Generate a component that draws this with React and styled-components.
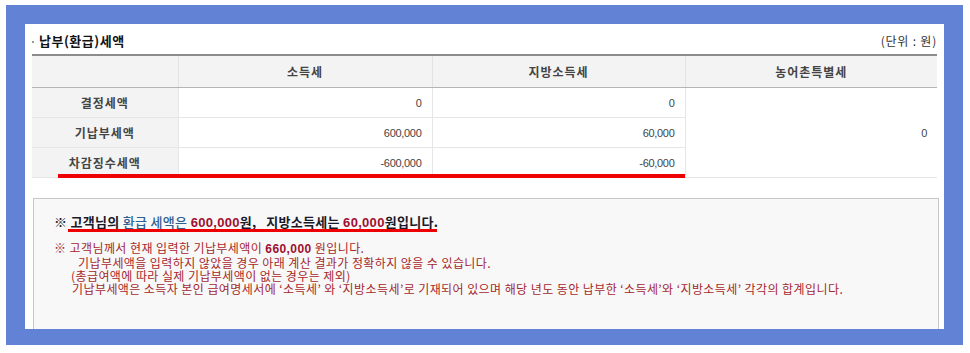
import React from "react";
import styled, { createGlobalStyle } from "styled-components";

const Global = createGlobalStyle`
  html, body { margin: 0; padding: 0; background: #ffffff; }
  body { font-family: "Liberation Sans", "Noto Sans CJK KR", sans-serif; }
`;

const Page = styled.div`
  padding: 5px 0 0 6px;
`;

const Frame = styled.div`
  width: 919px;
  background: #6282d5;
  padding: 19px 19px 16px 19px;
`;

const Sheet = styled.div`
  position: relative;
  height: 305px;
  background: #ffffff;
  padding: 0 7px;
  overflow: hidden;
`;

const TitleBar = styled.div`
  height: 30px;
  display: flex;
  align-items: center;
  justify-content: space-between;
`;

const Title = styled.div`
  display: flex;
  align-items: center;
  gap: 5px;
  font-family: "Noto Sans CJK KR", sans-serif;
  font-size: 13px;
  font-weight: 700;
  letter-spacing: 0.5px;
  color: #111;
  padding-top: 2px;
`;

const Bullet = styled.span`
  width: 2px;
  height: 2px;
  margin-top: 3px;
  background: #9a9a9a;
`;

const Unit = styled.div`
  font-family: "Noto Sans CJK KR", sans-serif;
  font-size: 12px;
  letter-spacing: 0.8px;
  color: #333;
  padding-top: 2px;
`;

const Table = styled.table`
  width: 905px;
  border-collapse: collapse;
  table-layout: fixed;
  border-top: 2px solid #8c8c8c;
`;

const HeadCell = styled.th`
  height: 31px;
  padding: 0;
  background: #f3f3f3;
  border-bottom: 1px solid #b4b4b4;
  border-left: 1px solid #e2e2e2;
  font-family: "Noto Sans CJK KR", sans-serif;
  font-size: 12px;
  font-weight: 700;
  letter-spacing: 1px;
  color: #444;
  text-align: center;
  &:first-child { border-left: none; }
`;

const Label = styled.th`
  height: 29px;
  padding: 0;
  background: #f3f3f3;
  border-bottom: 1px solid #e6e6e6;
  font-family: "Noto Sans CJK KR", sans-serif;
  font-size: 12px;
  font-weight: 700;
  color: #444;
  text-align: center;
  letter-spacing: 1px;
`;

const Value = styled.td`
  padding: 0 10px 0 0;
  border-bottom: 1px solid #e6e6e6;
  border-left: 1px solid #e6e6e6;
  font-family: "Liberation Sans", sans-serif;
  font-size: 11px;
  letter-spacing: -0.3px;
  color: #444;
  text-align: right;
  vertical-align: middle;
`;

const TableWrap = styled.div`
  position: relative;
`;

const Mark = styled.div`
  position: absolute;
  left: ${(p) => p.$left}px;
  width: ${(p) => p.$width}px;
  top: ${(p) => p.$top}px;
  height: ${(p) => p.$h}px;
  background: #ee0000;
`;

const Panel = styled.div`
  margin: 20px 0 0 1px;
  width: 884px;
  height: 200px;
  border: 1px solid #c8c8c8;
  background: #f8f8f8;
  padding: 14px 0 0 20px;
`;

const Lead = styled.div`
  position: relative;
  font-family: "Noto Sans CJK KR", sans-serif;
  font-size: 13px;
  font-weight: 700;
  line-height: 18px;
  letter-spacing: 0.3px;
  color: #1a1a2a;
  white-space: pre;
`;

const Blue = styled.span`
  color: #2e5f92;
  font-weight: 500;
`;

const Amount = styled.span`
  color: #9e1030;
  font-family: "Liberation Sans", sans-serif;
`;

const Notes = styled.div`
  margin-top: 9px;
  font-family: "Noto Sans CJK KR", sans-serif;
  font-size: 12px;
  line-height: 13px;
  letter-spacing: 0.42px;
  color: #a5282c;
`;

const Note = styled.div`
  padding-left: ${(p) => p.$indent || 0}px;
  white-space: pre;
`;

const Strong = styled.b`
  font-family: "Liberation Sans", sans-serif;
  color: #9e1030;
`;

export default function App() {
  return (
    <>
      <Global />
      <Page>
        <Frame>
          <Sheet>
            <TitleBar>
              <Title>
                <Bullet />
                납부(환급)세액
              </Title>
              <Unit>(단위 : 원)</Unit>
            </TitleBar>
            <TableWrap>
              <Table>
                <colgroup>
                  <col style={{ width: 146 }} />
                  <col style={{ width: 254 }} />
                  <col style={{ width: 253 }} />
                  <col style={{ width: 252 }} />
                </colgroup>
                <thead>
                  <tr>
                    <HeadCell />
                    <HeadCell>소득세</HeadCell>
                    <HeadCell>지방소득세</HeadCell>
                    <HeadCell>농어촌특별세</HeadCell>
                  </tr>
                </thead>
                <tbody>
                  <tr>
                    <Label>결정세액</Label>
                    <Value>0</Value>
                    <Value>0</Value>
                    <Value rowSpan={3}>0</Value>
                  </tr>
                  <tr>
                    <Label>기납부세액</Label>
                    <Value>600,000</Value>
                    <Value>60,000</Value>
                  </tr>
                  <tr>
                    <Label>차감징수세액</Label>
                    <Value>-600,000</Value>
                    <Value>-60,000</Value>
                  </tr>
                </tbody>
              </Table>
              <Mark $left={26} $width={627} $top={120} $h={4} />
            </TableWrap>
            <Panel>
              <Lead>
                ※ 고객님의 <Blue>환급 세액은</Blue> <Amount>600,000</Amount>원,{"   "}지방소득세는 <Amount>60,000</Amount>원입니다.
                <Mark $left={14} $width={369} $top={16} $h={3} />
              </Lead>
              <Notes>
                <Note>※ 고객님께서 현재 입력한 기납부세액이 <Strong>660,000</Strong> 원입니다.</Note>
                <Note $indent={24}>기납부세액을 입력하지 않았을 경우 아래 계산 결과가 정확하지 않을 수 있습니다.</Note>
                <Note $indent={17}>(총급여액에 따라 실제 기납부세액이 없는 경우는 제외)</Note>
                <Note $indent={18}>기납부세액은 소득자 본인 급여명세서에 ‘소득세’ 와 ‘지방소득세’로 기재되어 있으며 해당 년도 동안 납부한 ‘소득세’와 ‘지방소득세’ 각각의 합계입니다.</Note>
              </Notes>
            </Panel>
          </Sheet>
        </Frame>
      </Page>
    </>
  );
}
